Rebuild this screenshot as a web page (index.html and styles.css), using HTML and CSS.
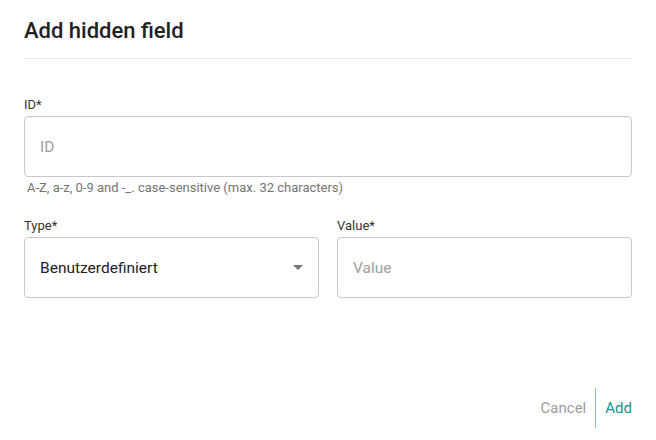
FILE: index.html
```html
<!DOCTYPE html>
<html lang="en">
<head>
<meta charset="utf-8">
<title>Add hidden field</title>
<link rel="stylesheet" href="styles.css">
</head>
<body>
<div class="dialog">
  <header class="dialog-header">
    <h1 class="dialog-title">Add hidden field</h1>
  </header>
  <main class="dialog-body">
    <div class="field">
      <label class="field-label" for="id">ID*</label>
      <input class="field-input" id="id" type="text" placeholder="ID">
      <div class="field-help">A-Z, a-z, 0-9 and -_. case-sensitive (max. 32 characters)</div>
    </div>
    <div class="row">
      <div class="field">
        <label class="field-label">Type*</label>
        <div class="field-select">
          <span>Benutzerdefiniert</span>
          <span class="select-arrow"></span>
        </div>
      </div>
      <div class="field">
        <label class="field-label" for="value">Value*</label>
        <input class="field-input" id="value" type="text" placeholder="Value">
      </div>
    </div>
  </main>
  <footer class="dialog-footer">
    <button class="btn btn-cancel" type="button">Cancel</button>
    <button class="btn btn-add" type="button">Add</button>
  </footer>
</div>
</body>
</html>
```
FILE: styles.css
```css
* {
  box-sizing: border-box;
}
html, body {
  margin: 0;
  padding: 0;
  background: #ffffff;
}
body {
  font-family: Roboto, "Liberation Sans", Arial, sans-serif;
  color: #333333;
}
.dialog {
  width: 656px;
  height: 440px;
  padding: 0 24px 12px;
  display: flex;
  flex-direction: column;
}
.dialog-header {
  padding: 19px 0 15px;
  border-bottom: 1px solid #e6e6e6;
}
.dialog-title {
  margin: 0;
  font-size: 22px;
  line-height: 24px;
  font-weight: 500;
  color: #222222;
}
.dialog-body {
  padding-top: 38px;
  display: flex;
  flex-direction: column;
  gap: 22px;
}
.field {
  display: flex;
  flex-direction: column;
  min-width: 0;
}
.field-label {
  font-size: 13px;
  line-height: 16px;
  color: #333333;
  margin-bottom: 3px;
}
.field-input,
.field-select {
  height: 61px;
  width: 100%;
  border: 1px solid #c8c8c8;
  border-radius: 4px;
  padding: 0 15px;
  font-family: inherit;
  font-size: 15.5px;
  color: #222222;
  background: #ffffff;
  outline: none;
}
.field-input::placeholder {
  color: #9e9e9e;
  opacity: 1;
}
.field-select {
  display: flex;
  align-items: center;
  justify-content: space-between;
  color: #222222;
}
.select-arrow {
  width: 0;
  height: 0;
  border-left: 5px solid transparent;
  border-right: 5px solid transparent;
  border-top: 5px solid #757575;
}
.field-help {
  margin-top: 3px;
  padding-left: 3px;
  font-size: 13px;
  line-height: 16px;
  color: #757575;
}
.row {
  display: grid;
  grid-template-columns: 1fr 1fr;
  column-gap: 18px;
}
.dialog-footer {
  margin-top: auto;
  display: flex;
  justify-content: flex-end;
  align-items: center;
}
.btn {
  font-family: inherit;
  font-size: 15px;
  height: 40px;
  background: none;
  border: none;
  padding: 0 10px;
  cursor: pointer;
}
.btn-cancel {
  color: #9e9e9e;
  padding-right: 9px;
}
.btn-add {
  color: #119688;
  font-weight: 400;
  padding-right: 0;
  border-left: 1px solid #8fbbe9;
  padding-left: 9px;
}
```
